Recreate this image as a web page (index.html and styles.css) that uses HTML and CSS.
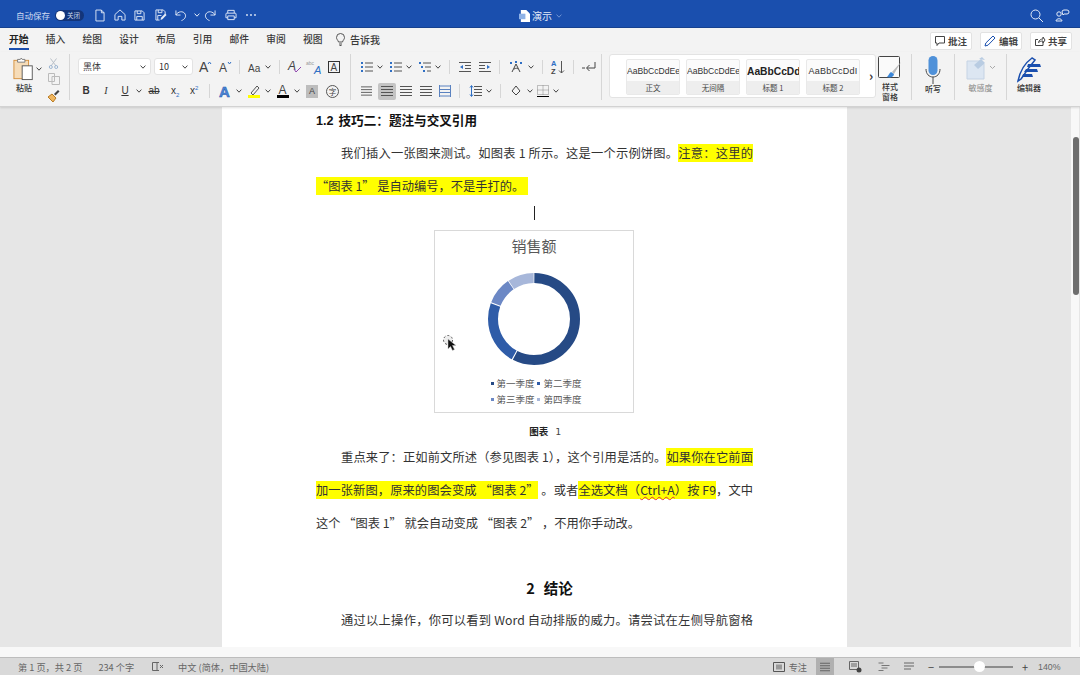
FILE: index.html
```html
<!DOCTYPE html>
<html lang="zh">
<head>
<meta charset="utf-8">
<title>演示</title>
<link rel="stylesheet" href="styles.css">
</head>
<body>
<svg class="defs" width="0" height="0">
  <symbol id="chev" viewBox="0 0 6 4"><path d="M.6.6 3 3.2 5.4.6" fill="none" stroke="currentColor" stroke-width="1"/></symbol>
  <symbol id="list" viewBox="0 0 12 12"><path d="M4 2h8M4 6h8M4 10h8" stroke="#555" fill="none"/><path d="M0 1h2v2H0zM0 5h2v2H0zM0 9h2v2H0z" fill="#2f6fc4"/></symbol>
  <symbol id="lines" viewBox="0 0 12 12"><path d="M0 1.500h12M0 4.500h12M0 7.500h12M0 10.500h12" stroke="#555" fill="none"/></symbol>
</svg>
<div class="app">
  <header class="titlebar">
    <div class="tb-left">
      <span class="autosave">自动保存</span>
      <span class="toggle"><i class="knob"></i><span class="toggle-t">关闭</span></span>
      <svg class="ml11" width="10" height="13" viewBox="0 0 11 14"><path d="M1 1h6l3 3v9H1zM7 1v3h3" fill="none" stroke="#e4ecf8"/></svg>
      <svg class="ml9" width="12" height="12" viewBox="0 0 13 13"><path d="M1 6 6.500 1 12 6v6H8.500V8h-4v4H1z" fill="none" stroke="#e4ecf8"/></svg>
      <svg class="ml8" width="11" height="11" viewBox="0 0 12 12"><path d="M1 1h8l2 2v8H1zM3.500 1v3h4V1M3 11V7h6v4" fill="none" stroke="#e4ecf8"/></svg>
      <svg class="ml10" width="12" height="12" viewBox="0 0 13 13"><path d="M1 1h8l2 2v3M5 12H1V1M3.500 1v3h4V1M3 12V7h4" fill="none" stroke="#e4ecf8"/><path d="M6 12l.5-2.500L11 5l1.500 1.500L8 11z" fill="#e4ecf8"/></svg>
      <svg class="ml8" width="12" height="13" viewBox="0 0 13 13"><path d="M1 1v5h5M1 6c2-4 8-5 10-1 1.500 3-1 6-4 7" fill="none" stroke="#e4ecf8"/></svg>
      <svg class="tb-chev ml7" width="6" height="4"><use href="#chev"/></svg>
      <svg class="ml4" width="12" height="13" viewBox="0 0 13 13"><path d="M12 1v5H7M12 6C10 2 4 1 2 5c-1.500 3 1 6 4 7" fill="none" stroke="#e4ecf8"/></svg>
      <svg class="ml9" width="12" height="12" viewBox="0 0 13 12"><path d="M3 4V1h7v3M3 9H1V5a1 1 0 0 1 1-1h9a1 1 0 0 1 1 1v4h-2M3 7h7v4H3z" fill="none" stroke="#e4ecf8"/></svg>
      <svg class="ml9" width="10" height="2" viewBox="0 0 10 2"><circle cx="1" cy="1" r=".9" fill="#e4ecf8"/><circle cx="5" cy="1" r=".9" fill="#e4ecf8"/><circle cx="9" cy="1" r=".9" fill="#e4ecf8"/></svg>
    </div>
    <div class="tb-center">
      <svg width="11" height="12" viewBox="0 0 12 13"><path d="M2 0h6l4 4v9H2z" fill="#fff"/><rect y="4" width="7" height="6" fill="#8fb2e6"/></svg>
      <span class="doc-name">演示</span>
      <svg class="tb-chev dim" width="6" height="4"><use href="#chev"/></svg>
    </div>
    <div class="tb-right">
      <svg width="13" height="13" viewBox="0 0 13 13"><circle cx="5.500" cy="5.500" r="4.500" fill="none" stroke="#e4ecf8"/><path d="M9 9l4 4" stroke="#e4ecf8"/></svg>
      <svg width="14" height="13" viewBox="0 0 14 13"><circle cx="4" cy="5" r="2.200" fill="none" stroke="#e4ecf8"/><path d="M1 12c0-3 6-3 6 0zM7 3a2 2 0 0 1 2-2h3a2 2 0 0 1 0 4H9l-1 1z" fill="none" stroke="#e4ecf8"/></svg>
    </div>
  </header>

  <nav class="tabs">
    <div class="tab-list">
      <span class="tab active">开始</span><span class="tab">插入</span><span class="tab">绘图</span><span class="tab">设计</span><span class="tab">布局</span><span class="tab">引用</span><span class="tab">邮件</span><span class="tab">审阅</span><span class="tab">视图</span>
      <svg class="bulb" width="9" height="13" viewBox="0 0 9 13"><path d="M2.500 9C2 7 .5 6.500.5 4.500a4 4 0 0 1 8 0C8.500 6.500 7 7 6.500 9zM3 11h3M3.500 12.500h2" fill="none" stroke="#555"/></svg>
      <span class="tell">告诉我</span>
    </div>
    <div class="tab-btns">
      <span class="tbtn"><svg width="10" height="10" viewBox="0 0 10 10"><path d="M.5.500h9v6.500H4L2 9.500V7H.5z" fill="none" stroke="#444"/></svg>批注</span>
      <span class="tbtn"><svg width="12" height="12" viewBox="0 0 12 12"><path d="M1 11l.8-3L9 1l2 2-7 7.200z" fill="none" stroke="#1a4fae"/></svg>编辑</span>
      <span class="tbtn"><svg width="10" height="10" viewBox="0 0 10 10"><path d="M8 5.500V9.500H.5v-6H3M3.500 6.500C4 4 6 3 8 3V1l2 3-2 3V5C6 5 5 5.500 3.500 6.500z" fill="none" stroke="#444"/></svg>共享</span>
    </div>
  </nav>

  <section class="ribbon">
    <div class="grp g-clip">
      <div class="paste-col">
        <svg width="22" height="25" viewBox="0 0 24 26"><rect x="1" y="3" width="16" height="20" fill="#f6dcb8" stroke="#d58f3c"/><path d="M5 5V2h3l1-1.500L10 2h3v3z" fill="#fff" stroke="#777"/><rect x="10" y="9" width="11" height="15" fill="#fff" stroke="#555"/></svg>
        <span class="big-label">粘贴</span>
      </div>
      <svg class="cv clip-chev" width="6" height="4"><use href="#chev"/></svg>
      <div class="clip-tools">
        <svg width="9" height="11" viewBox="0 0 9 11"><path d="M1.500.5 7 8M7.500.5 2 8" stroke="#b9c0c8" fill="none"/><circle cx="1.800" cy="9" r="1.500" fill="none" stroke="#9db6d2"/><circle cx="7.200" cy="9" r="1.500" fill="none" stroke="#9db6d2"/></svg>
        <svg width="12" height="12" viewBox="0 0 12 12"><path d="M.5.500h6v8h-6zM4 3.500h7.500v8H4z" fill="#f3f3f3" stroke="#bbb"/></svg>
        <svg width="13" height="13" viewBox="0 0 13 13"><path d="M1 8l4-3 4 4-3 4z" fill="#f0b65f" stroke="#b97b22"/><path d="M7 5l4-4 1.500 1.500-4 4z" fill="#444"/></svg>
      </div>
    </div>
    <div class="grp g-font">
      <div class="row">
        <span class="select w73">黑体<svg class="cv" width="6" height="4"><use href="#chev"/></svg></span>
        <span class="select w39 ml3">10<svg class="cv" width="6" height="4"><use href="#chev"/></svg></span>
        <svg class="ml6" width="12" height="12"><text x="0" y="11" class="gl14">A</text><path d="M9 3l1.500-2L12 3" fill="none" stroke="#2f6fc4"/></svg>
        <svg class="ml8" width="12" height="12"><text x="0" y="11" class="gl12">A</text><path d="M9 1l1.500 2L12 1" fill="none" stroke="#2f6fc4"/></svg>
        <i class="vsep ml8"></i>
        <svg class="ml8" width="14" height="12"><text x="0" y="10.500" class="gl10">Aa</text></svg>
        <svg class="cv ml3" width="6" height="4"><use href="#chev"/></svg>
        <i class="vsep ml8"></i>
        <svg class="ml8" width="13" height="13" viewBox="0 0 13 13"><text x="0" y="10" class="gl12i">A</text><path d="M6 9l2 3 5-5" fill="none" stroke="#8e44ad"/></svg>
        <svg class="ml5" width="16" height="13" viewBox="0 0 16 13"><text x="0" y="5" class="abc">abc</text><text x="8" y="14" class="gl11b">A</text></svg>
        <svg class="ml6" width="12" height="12" viewBox="0 0 12 12"><rect x=".5" y=".5" width="11" height="11" fill="none" stroke="#333"/><text x="2.500" y="9.500" class="gl9">A</text></svg>
      </div>
      <div class="row r2 pl4">
        <b class="fmt w8">B</b>
        <i class="fmt w8 ml12 ital">I</i>
        <u class="fmt w8 ml11">U</u>
        <svg class="cv ml7" width="6" height="4"><use href="#chev"/></svg>
        <s class="fmt w14 ml5">ab</s>
        <span class="fmt w8 ml10">x<sub class="blue-s">2</sub></span>
        <span class="fmt w8 ml11">x<sup class="blue-s">2</sup></span>
        <i class="vsep ml11"></i>
        <svg class="ml9" width="13" height="13"><text x="0" y="12" class="txtfx">A</text></svg>
        <svg class="cv ml4" width="6" height="4"><use href="#chev"/></svg>
        <svg class="ml6" width="13" height="14" viewBox="0 0 13 14"><path d="M3 9l6-7 2 2-6 7z" fill="none" stroke="#555"/><rect y="11" width="12" height="3" fill="#ff0"/></svg>
        <svg class="cv ml4" width="6" height="4"><use href="#chev"/></svg>
        <svg class="ml6" width="13" height="14" viewBox="0 0 13 14"><text x="1.500" y="10" class="gl12">A</text><rect y="11" width="12" height="3" fill="#000"/></svg>
        <svg class="cv ml4" width="6" height="4"><use href="#chev"/></svg>
        <span class="charbg ml6">A</span>
        <span class="charcircle ml8">字</span>
      </div>
    </div>
    <div class="grp g-para">
      <div class="row">
        <svg width="12" height="12"><use href="#list"/></svg><svg class="cv ml4" width="6" height="4"><use href="#chev"/></svg>
        <svg class="ml7" width="12" height="12"><use href="#list"/></svg><svg class="cv ml4" width="6" height="4"><use href="#chev"/></svg>
        <svg class="ml7" width="12" height="12" viewBox="0 0 12 12"><path d="M4 2h8M6 6h6M8 10h4" stroke="#555" fill="none"/><path d="M0 1h2v2H0zM2 5h2v2H2zM4 9h2v2H4z" fill="#2f6fc4"/></svg><svg class="cv ml4" width="6" height="4"><use href="#chev"/></svg>
        <i class="vsep ml8"></i>
        <svg class="ml9" width="12" height="10" viewBox="0 0 12 10"><path d="M0 .5h12M6 3.500h6M6 6.500h6M0 9.500h12" stroke="#555" fill="none"/><path d="M4 3 1 5l3 2z" fill="#2f6fc4"/></svg>
        <svg class="ml8" width="12" height="10" viewBox="0 0 12 10"><path d="M0 .5h12M0 3.500h6M0 6.500h6M0 9.500h12" stroke="#555" fill="none"/><path d="M8 3l3 2-3 2z" fill="#2f6fc4"/></svg>
        <i class="vsep ml8"></i>
        <svg class="ml9" width="14" height="12" viewBox="0 0 14 12"><path d="M3 11 7 3l4 8M5 8c2-1 3-1 4 0" fill="none" stroke="#444"/><path d="M1 1h2v2H1zM11 1h2v2h-2zM6 0h2v2H6z" fill="#2f6fc4"/></svg>
        <svg class="cv ml5" width="6" height="4"><use href="#chev"/></svg>
        <i class="vsep ml8"></i>
        <svg class="ml8" width="14" height="14" viewBox="0 0 14 14"><text x="0" y="6" class="gl7b">A</text><text x="0" y="13.500" class="gl7">Z</text><path d="M10.500 1v12M8 10.500l2.500 2.500 2.500-2.500" fill="none" stroke="#555"/></svg>
        <i class="vsep ml8"></i>
        <svg class="ml8" width="14" height="12" viewBox="0 0 14 12"><path d="M13 1v6H5M7.500 4 4.500 7l3 3M0 7h3" fill="none" stroke="#444"/></svg>
      </div>
      <div class="row r2">
        <svg width="11" height="12"><use href="#lines"/></svg>
        <span class="align-on ml6"><svg width="12" height="12"><use href="#lines"/></svg></span>
        <svg class="ml4" width="12" height="12"><use href="#lines"/></svg>
        <svg class="ml8" width="12" height="12"><use href="#lines"/></svg>
        <svg class="ml7" width="12" height="12" viewBox="0 0 12 12"><path d="M0 1h12M0 4.500h12M0 7.500h12M0 11h12M.5 0v12M11.500 0v12" stroke="#5a82c0" fill="none"/></svg>
        <i class="vsep ml8"></i>
        <svg class="ml10" width="12" height="12" viewBox="0 0 12 12"><path d="M4 1.500h8M4 4.500h8M4 7.500h8M4 10.500h8" stroke="#555" fill="none"/><path d="M1.500 1v10M0 2.500l1.500-2 1.500 2M0 9.500l1.500 2 1.500-2" stroke="#2f6fc4" fill="none"/></svg>
        <svg class="cv ml4" width="6" height="4"><use href="#chev"/></svg>
        <i class="vsep ml8"></i>
        <svg class="ml10" width="12" height="12" viewBox="0 0 12 12"><path d="M5 1 1 6l4 4 4-4z" fill="none" stroke="#444"/></svg>
        <svg class="cv ml4" width="6" height="4"><use href="#chev"/></svg>
        <svg class="ml4" width="12" height="12" viewBox="0 0 12 12"><path d="M.5.500h11v9H.5zM6 .5v9M.5 5h11" fill="none" stroke="#888" stroke-dasharray="1 1"/><path d="M0 11.500h12" stroke="#000"/></svg>
        <svg class="cv ml4" width="6" height="4"><use href="#chev"/></svg>
      </div>
    </div>
    <div class="styles-panel">
      <div class="style-card"><span class="st-pre">AaBbCcDdEe</span><span class="st-lab">正文</span></div>
      <div class="style-card"><span class="st-pre">AaBbCcDdEe</span><span class="st-lab">无间隔</span></div>
      <div class="style-card"><span class="st-pre st-h1">AaBbCcDd</span><span class="st-lab">标题 1</span></div>
      <div class="style-card"><span class="st-pre st-h2">AaBbCcDdI</span><span class="st-lab">标题 2</span></div>
      <span class="st-more">›</span>
    </div>
    <div class="big-tool t-pane">
      <svg width="24" height="24" viewBox="0 0 24 24"><rect x=".5" y=".5" width="21" height="21" rx="1" fill="#fafafa" stroke="#444"/><path d="M23 6l-9 10 2 2z" fill="#bbb"/><path d="M13 16c-2 1-2 3-4 5 3 1 7 0 7-3z" fill="#3a86d8"/></svg>
      <span class="big-label lh9">样式<br>窗格</span>
    </div>
    <div class="big-tool t-mic">
      <svg width="16" height="29" viewBox="0 0 16 29"><rect x="3.500" y="0" width="9" height="19" rx="4.500" fill="#4f91d9"/><path d="M1 13c0 5 3 8 7 8s7-3 7-8M8 21v7" fill="none" stroke="#4a4a4a"/></svg>
      <span class="big-label">听写</span>
    </div>
    <div class="big-tool t-sens">
      <svg width="30" height="24" viewBox="0 0 30 24"><path d="M1 4h14l3 3v15H1z" fill="#dce6f2" stroke="#c5d3e4"/><path d="M8 8l7-6 4 4-7 6zM13 2l3-2 3 3" fill="#b9cce2"/><path d="M24 9l2.500 2.500L29 9" fill="none" stroke="#aaa"/></svg>
      <span class="big-label muted">敏感度</span>
    </div>
    <div class="big-tool t-edit">
      <svg width="25" height="25" viewBox="0 0 25 25"><path d="M1 24C3 14 8 6 15 1l3 2C13 9 8 16 4 22z" fill="none" stroke="#1a4fae" stroke-width="1.500"/><path d="M11 7h12l1 3H10zM9 12h11l1 3H7zM6 17h9l1 3H5z" fill="#1a4fae"/></svg>
      <span class="big-label">编辑器</span>
    </div>
  </section>

  <main class="workspace">
    <div class="doc-row">
      <article class="page">
        <h2 class="h12"><span class="num">1.2</span>技巧二：题注与交叉引用</h2>
        <p class="line indent">我们插入一张图来测试。如图表 1 所示。这是一个示例饼图。<mark>注意：这里的</mark></p>
        <p class="line last"><mark class="tail">“图表 1” 是自动编号，不是手打的。</mark></p>
        <div class="caret-line"><i class="caret"></i></div>
        <figure class="chart">
          <div class="chart-title">销售额</div>
          <svg class="donut" width="96" height="96" viewBox="0 0 96 96">
            <g fill="none" stroke-width="10" transform="rotate(-90 48 48)">
              <circle cx="48" cy="48" r="41" pathLength="360" stroke="#264a85" stroke-dasharray="207 153" stroke-dashoffset="-0.500"/>
              <circle cx="48" cy="48" r="41" pathLength="360" stroke="#2f5ca8" stroke-dasharray="81 279" stroke-dashoffset="-209"/>
              <circle cx="48" cy="48" r="41" pathLength="360" stroke="#6c88c5" stroke-dasharray="34 326" stroke-dashoffset="-291.500"/>
              <circle cx="48" cy="48" r="41" pathLength="360" stroke="#a7b7da" stroke-dasharray="33 327" stroke-dashoffset="-326.500"/>
            </g>
          </svg>
          <div class="legend">
            <span class="lg"><i class="sw c1"></i>第一季度</span><span class="lg"><i class="sw c2"></i>第二季度</span>
            <span class="lg"><i class="sw c3"></i>第三季度</span><span class="lg"><i class="sw c4"></i>第四季度</span>
          </div>
        </figure>
        <div class="caption"><b>图表</b><span class="cap-n">1</span></div>
        <p class="line indent">重点来了：正如前文所述（参见图表 1），这个引用是活的。<mark>如果你在它前面</mark></p>
        <p class="line"><mark>加一张新图，原来的图会变成 “图表 2”</mark> 。或者<mark>全选文档（<span class="squig">Ctrl+A</span>）按 F9</mark>，文中</p>
        <p class="line last">这个 “图表 1” 就会自动变成 “图表 2” ，不用你手动改。</p>
        <h1 class="h2"><span>2</span><span>结论</span></h1>
        <p class="line indent">通过以上操作，你可以看到 Word 自动排版的威力。请尝试在左侧导航窗格</p>
        <svg class="pointer" width="16" height="18" viewBox="0 0 16 18"><circle cx="6" cy="6" r="4.500" fill="#eee" stroke="#555" stroke-dasharray="2 2"/><path d="M6 5l0 10 2.500-2.500L10.500 16.500l2-1-2-4h3.500z" fill="#111" stroke="#ccc" stroke-width=".5"/></svg>
      </article>
      <div class="scrollbar"><i class="thumb"></i></div>
    </div>
    <div class="hbar"></div>
  </main>

  <footer class="status">
    <div class="st-left">
      <span>第 1 页，共 2 页</span>
      <span class="ml16">234 个字</span>
      <svg class="ml18" width="12" height="10" viewBox="0 0 12 10"><path d="M5 .5H.5v8H5zM5 .5h2M5 8.500h2" fill="none" stroke="#666"/><path d="M8 3l3 3M11 3 8 6" stroke="#666" fill="none"/></svg>
      <span class="ml14">中文 (简体，中国大陆)</span>
    </div>
    <div class="st-right">
      <svg width="12" height="10" viewBox="0 0 12 10"><path d="M.5.500h11v9H.5z" fill="none" stroke="#555"/><path d="M3 2.500h6v5H3z" fill="#999"/></svg>
      <span class="ml4">专注</span>
      <span class="view-on ml9"><svg width="10" height="10"><use href="#lines"/></svg></span>
      <svg class="ml15" width="13" height="12" viewBox="0 0 13 12"><path d="M.5.500h9v8h-9zM2 3h6M2 5h6" fill="none" stroke="#666"/><circle cx="10" cy="9" r="2.500" fill="#444"/></svg>
      <svg class="ml16" width="12" height="9" viewBox="0 0 11 9"><path d="M0 1h5M3 3.500h8M3 6h6M0 8.500h5" stroke="#777" fill="none"/></svg>
      <svg class="ml14" width="10" height="9" viewBox="0 0 10 9"><path d="M0 1h10M0 4h10M0 7h7" stroke="#666" fill="none"/></svg>
      <span class="zm ml14">−</span>
      <span class="slider ml5"><i class="slider-k"></i></span>
      <span class="zm ml9">+</span>
      <span class="pct ml10">140%</span>
    </div>
  </footer>
</div>
</body>
</html>
```

FILE: styles.css
```css
* { box-sizing: border-box; }
html, body { margin: 0; height: 100%; }
body { font-family: "Noto Sans CJK SC", "Liberation Sans", sans-serif; color: #333; overflow: hidden; }
.defs { position: absolute; }
.app { width: 1080px; height: 675px; display: flex; flex-direction: column; overflow: hidden; }
svg { display: block; flex: none; overflow: visible; }
i { font-style: normal; }

.ml3 { margin-left: 3px; } .ml4 { margin-left: 4px; } .ml5 { margin-left: 5px; } .ml6 { margin-left: 6px; }
.ml7 { margin-left: 7px; } .ml8 { margin-left: 8px; } .ml9 { margin-left: 9px; } .ml10 { margin-left: 10px; }
.ml11 { margin-left: 11px; } .ml12 { margin-left: 12px; } .ml14 { margin-left: 14px; } .ml15 { margin-left: 15px; } .ml16 { margin-left: 16px; } .ml18 { margin-left: 18px; }

/* title bar */
.titlebar { height: 28px; flex: none; background: #1a4fae; border-bottom: 1px solid #16418f; position: relative; display: flex; align-items: center; justify-content: space-between; padding: 3px 11px 0 16px; color: #e4ecf8; }
.tb-left, .tb-right, .tb-center { display: flex; align-items: center; }
.autosave { font-size: 8.500px; color: #cfdcf2; }
.toggle { margin-left: 5px; width: 29px; height: 11px; border-radius: 6px; background: #13357a; display: flex; align-items: center; }
.knob { width: 9px; height: 9px; border-radius: 50%; background: #fff; margin-left: 1px; }
.toggle-t { font-size: 6.500px; margin-left: 2px; color: #c8d5ec; }
.tb-chev { color: #e4ecf8; }
.tb-chev.dim { color: #6f93d2; margin-left: 4px; }
.tb-center { position: absolute; left: 519px; top: 9px; }
.doc-name { font-size: 10px; margin-left: 2px; color: #e4ecf8; line-height: 13px; }
.tb-right { gap: 12px; }

/* tabs */
.tabs { height: 24px; flex: none; background: #f3f3f3; display: flex; align-items: flex-start; justify-content: space-between; padding: 0 8px 0 9px; }
.tab-list { display: flex; align-items: center; gap: 17.250px; height: 22px; }
.tab { font-size: 9.750px; font-weight: 500; color: #3a3a3a; line-height: 23px; height: 22px; position: relative; }
.tab.active { font-weight: 700; color: #222; }
.tab.active::after { content: ""; position: absolute; left: 0; right: 0; bottom: 0; height: 2px; background: #1a4fae; }
.bulb { margin-left: -4px; }
.tell { font-size: 10px; font-weight: 500; margin-left: -12px; color: #3a3a3a; line-height: 23px; }
.tab-btns { display: flex; gap: 8px; margin-top: 4px; }
.tbtn { width: 42px; height: 18px; background: #fff; border: 1px solid #e2e2e2; border-radius: 2px; display: flex; align-items: center; justify-content: center; gap: 3px; font-size: 9.500px; font-weight: 700; color: #444; }

/* ribbon */
.ribbon { height: 55px; flex: none; background: #f3f3f3; border-bottom: 1px solid #d2d2d2; box-shadow: 0 1px 2px rgba(0,0,0,.12); display: flex; z-index: 2; position: relative; font-size: 9px; }
.grp { height: 46px; margin-top: 2px; flex: none; border-right: 1px solid #d6d6d6; }
.g-clip { width: 70px; display: flex; padding-left: 13px; }
.paste-col { width: 22px; display: flex; flex-direction: column; align-items: center; padding-top: 3px; }
.big-label { font-size: 8px; line-height: 11px; color: #333; font-weight: 500; text-align: center; white-space: nowrap; }
.clip-chev { margin: 13px 0 0 1px; }
.clip-tools { margin-left: 5px; display: flex; flex-direction: column; align-items: center; gap: 4px; padding-top: 4px; }
.cv { color: #444; }

.g-font { width: 281px; padding-left: 8px; }
.g-para { width: 251px; padding-left: 10px; }
.row { display: flex; align-items: center; height: 17px; margin-top: 4px; }
.r2 { margin-top: 6px; height: 20px; }
.pl4 { padding-left: 4px; }
.vsep { width: 1px; height: 14px; background: #d6d6d6; flex: none; }
.select { height: 17px; background: #fff; border: 1px solid #e3e3e3; border-radius: 3px; font-size: 9px; display: flex; align-items: center; justify-content: space-between; padding: 0 4px; color: #333; flex: none; }
.w73 { width: 73px; } .w39 { width: 39px; }
.fmt { font-family: "Liberation Sans", sans-serif; font-size: 10px; color: #333; text-align: center; flex: none; display: block; line-height: 12px; }
.w8 { width: 8px; } .w14 { width: 14px; }
.ital { font-family: "Liberation Serif", serif; font-style: italic; }
.blue-s { font-size: 6px; color: #2f6fc4; line-height: 0; }
text { font-family: "Liberation Sans", sans-serif; fill: #444; }
.gl14 { font-size: 14px; } .gl12 { font-size: 12px; } .gl10 { font-size: 10px; } .gl9 { font-size: 10px; }
.gl12i { font-size: 12px; font-style: italic; }
.gl7, .gl7b { font-size: 7.500px; font-weight: 700; }
.gl7b { fill: #2f6fc4; }
.abc { font-size: 5px; fill: #999; }
.gl11b { font-size: 11px; font-style: italic; fill: #2f6fc4; }
.txtfx { font-size: 15px; font-weight: 700; fill: #4d8ad6; stroke: #1a4fae; stroke-width: .5; }
.charbg { width: 12px; height: 13px; background: #bdbdbd; font-size: 9px; font-family: "Liberation Sans", sans-serif; display: flex; align-items: center; justify-content: center; color: #444; flex: none; }
.charcircle { width: 13px; height: 13px; border: 1px solid #555; border-radius: 50%; font-size: 7.500px; display: flex; align-items: center; justify-content: center; flex: none; color: #444; }
.align-on { width: 18px; height: 17px; background: #c4c4c4; border-radius: 2px; display: flex; align-items: center; justify-content: center; flex: none; }

.styles-panel { flex: none; width: 267px; height: 44px; margin: 2px 0 0 7px; background: #fff; border: 1px solid #e3e3e3; border-radius: 3px; display: flex; gap: 6px; padding: 4px 0 0 16px; }
.style-card { width: 54px; height: 36px; border: 1px solid #e9e9e9; border-radius: 2px; background: #fbfbfb; display: flex; flex-direction: column; flex: none; overflow: hidden; }
.st-pre { height: 21px; line-height: 23px; text-align: center; font-family: "Liberation Sans", sans-serif; font-size: 8.600px; color: #333; white-space: nowrap; }
.st-h1 { font-weight: 700; font-size: 10.250px; color: #222; }
.st-h2 { font-size: 9px; letter-spacing: .2px; }
.st-lab { flex: 1; background: #eeeeee; font-size: 7.500px; line-height: 14px; text-align: center; color: #444; }
.st-more { margin-left: 3px; font-size: 13px; line-height: 34px; color: #333; font-weight: 700; }

.big-tool { flex: none; display: flex; flex-direction: column; align-items: center; height: 46px; margin-top: 2px; padding-top: 3px; border-right: 1px solid #d6d6d6; }
.big-tool .big-label { margin-top: 1px; }
.t-pane { width: 36px; padding-right: 7px; padding-top: 2px; }
.t-pane .lh9 { line-height: 9.500px; margin-top: 2px; font-size: 8px; }
.t-mic { width: 43px; padding-top: 2px; }
.t-mic .big-label { margin-top: -2.500px; }
.t-sens { width: 52px; }
.muted { color: #999; }
.t-edit { width: 44px; border-right: 0; }
.t-edit .big-label { margin-top: 0; }

/* workspace */
.workspace { flex: 1; background: #e6e6e6; display: flex; flex-direction: column; overflow: hidden; min-height: 0; }
.doc-row { flex: 1; min-height: 0; display: flex; justify-content: space-between; padding-left: 222px; }
.hbar { height: 10px; flex: none; background: #f8f8f8; position: relative; z-index: 1; }
.page { width: 625px; background: #fff; padding: 0 94px; flex: none; position: relative; height: 100%; }
.h12 { margin: 0; height: 29.500px; line-height: 25px; font-size: 12.600px; font-weight: 700; color: #111; white-space: nowrap; }
.num { font-family: "Liberation Sans", sans-serif; margin-right: 5px; }
.line { margin: 0; height: 33px; line-height: 33px; font-size: 12.250px; color: #333; text-align: justify; text-align-last: justify; font-weight: 400; }
.line.last { text-align-last: left; }
.indent { text-indent: 25px; }
mark { background: #ff0; color: #333; }
mark.tail { padding-right: 4px; }
.caret-line { height: 27.500px; display: flex; justify-content: center; padding-top: 3.500px; margin-right: 1px; }
.caret { width: 1px; height: 14px; background: #222; }
.chart { margin: 0 0 0 118px; width: 200px; height: 183px; border: 1px solid #d9d9d9; display: flex; flex-direction: column; align-items: center; background: #fff; }
.chart-title { font-size: 15px; line-height: 20px; margin-top: 5px; color: #595959; }
.donut { margin-top: 15px; }
.legend { margin: 10px 0 0 4px; width: 91px; display: flex; flex-wrap: wrap; justify-content: space-between; row-gap: 3px; }
.lg { font-size: 9.500px; line-height: 13px; color: #595959; display: flex; align-items: center; gap: 3px; white-space: nowrap; }
.sw { width: 3px; height: 3px; display: block; }
.c1 { background: #264a85; } .c2 { background: #2f5ca8; } .c3 { background: #6c88c5; } .c4 { background: #a7b7da; }
.caption { text-align: center; font-size: 9.500px; line-height: 14px; padding: 11px 0 0 21px; height: 27.500px; color: #222; }
.cap-n { font-family: "DejaVu Sans Mono", monospace; font-size: 9.500px; color: #444; margin-left: 7px; }
.squig { text-decoration: underline wavy #d33; text-decoration-thickness: 1px; }
.h2 { margin: 31px 0 0; height: 33.500px; line-height: 33px; font-size: 14.500px; font-weight: 700; color: #111; display: flex; justify-content: center; gap: 9px; padding-left: 30px; }
.pointer { position: absolute; left: 220px; top: 227px; }

.scrollbar { width: 9px; height: 100%; background: #f8f8f8; flex: none; margin-left: auto; position: relative; border-right: 1px solid #e6e6e6; }
.thumb { position: absolute; left: 2px; top: 30px; width: 6px; height: 158px; border-radius: 3px; background: #6e6e6e; }

/* status */
.status { height: 18px; flex: none; background: #d9d9d9; border-top: 1px solid #bdbdbd; display: flex; justify-content: space-between; align-items: center; padding: 0 18px 0 18px; font-size: 9.200px; color: #666; }
.st-left, .st-right { display: flex; align-items: center; }
.view-on { width: 18px; height: 17px; background: #b0b0b0; display: flex; align-items: center; justify-content: center; }
.zm { font-size: 11px; line-height: 12px; color: #444; width: 6px; text-align: center; }
.slider { width: 74px; height: 2px; background: #8c8c8c; position: relative; display: block; }
.slider-k { position: absolute; left: 35px; top: -5px; width: 11px; height: 11px; border-radius: 50%; background: #fff; }
.pct { font-size: 8.800px; font-family: "Liberation Sans", sans-serif; width: 24px; }
```
